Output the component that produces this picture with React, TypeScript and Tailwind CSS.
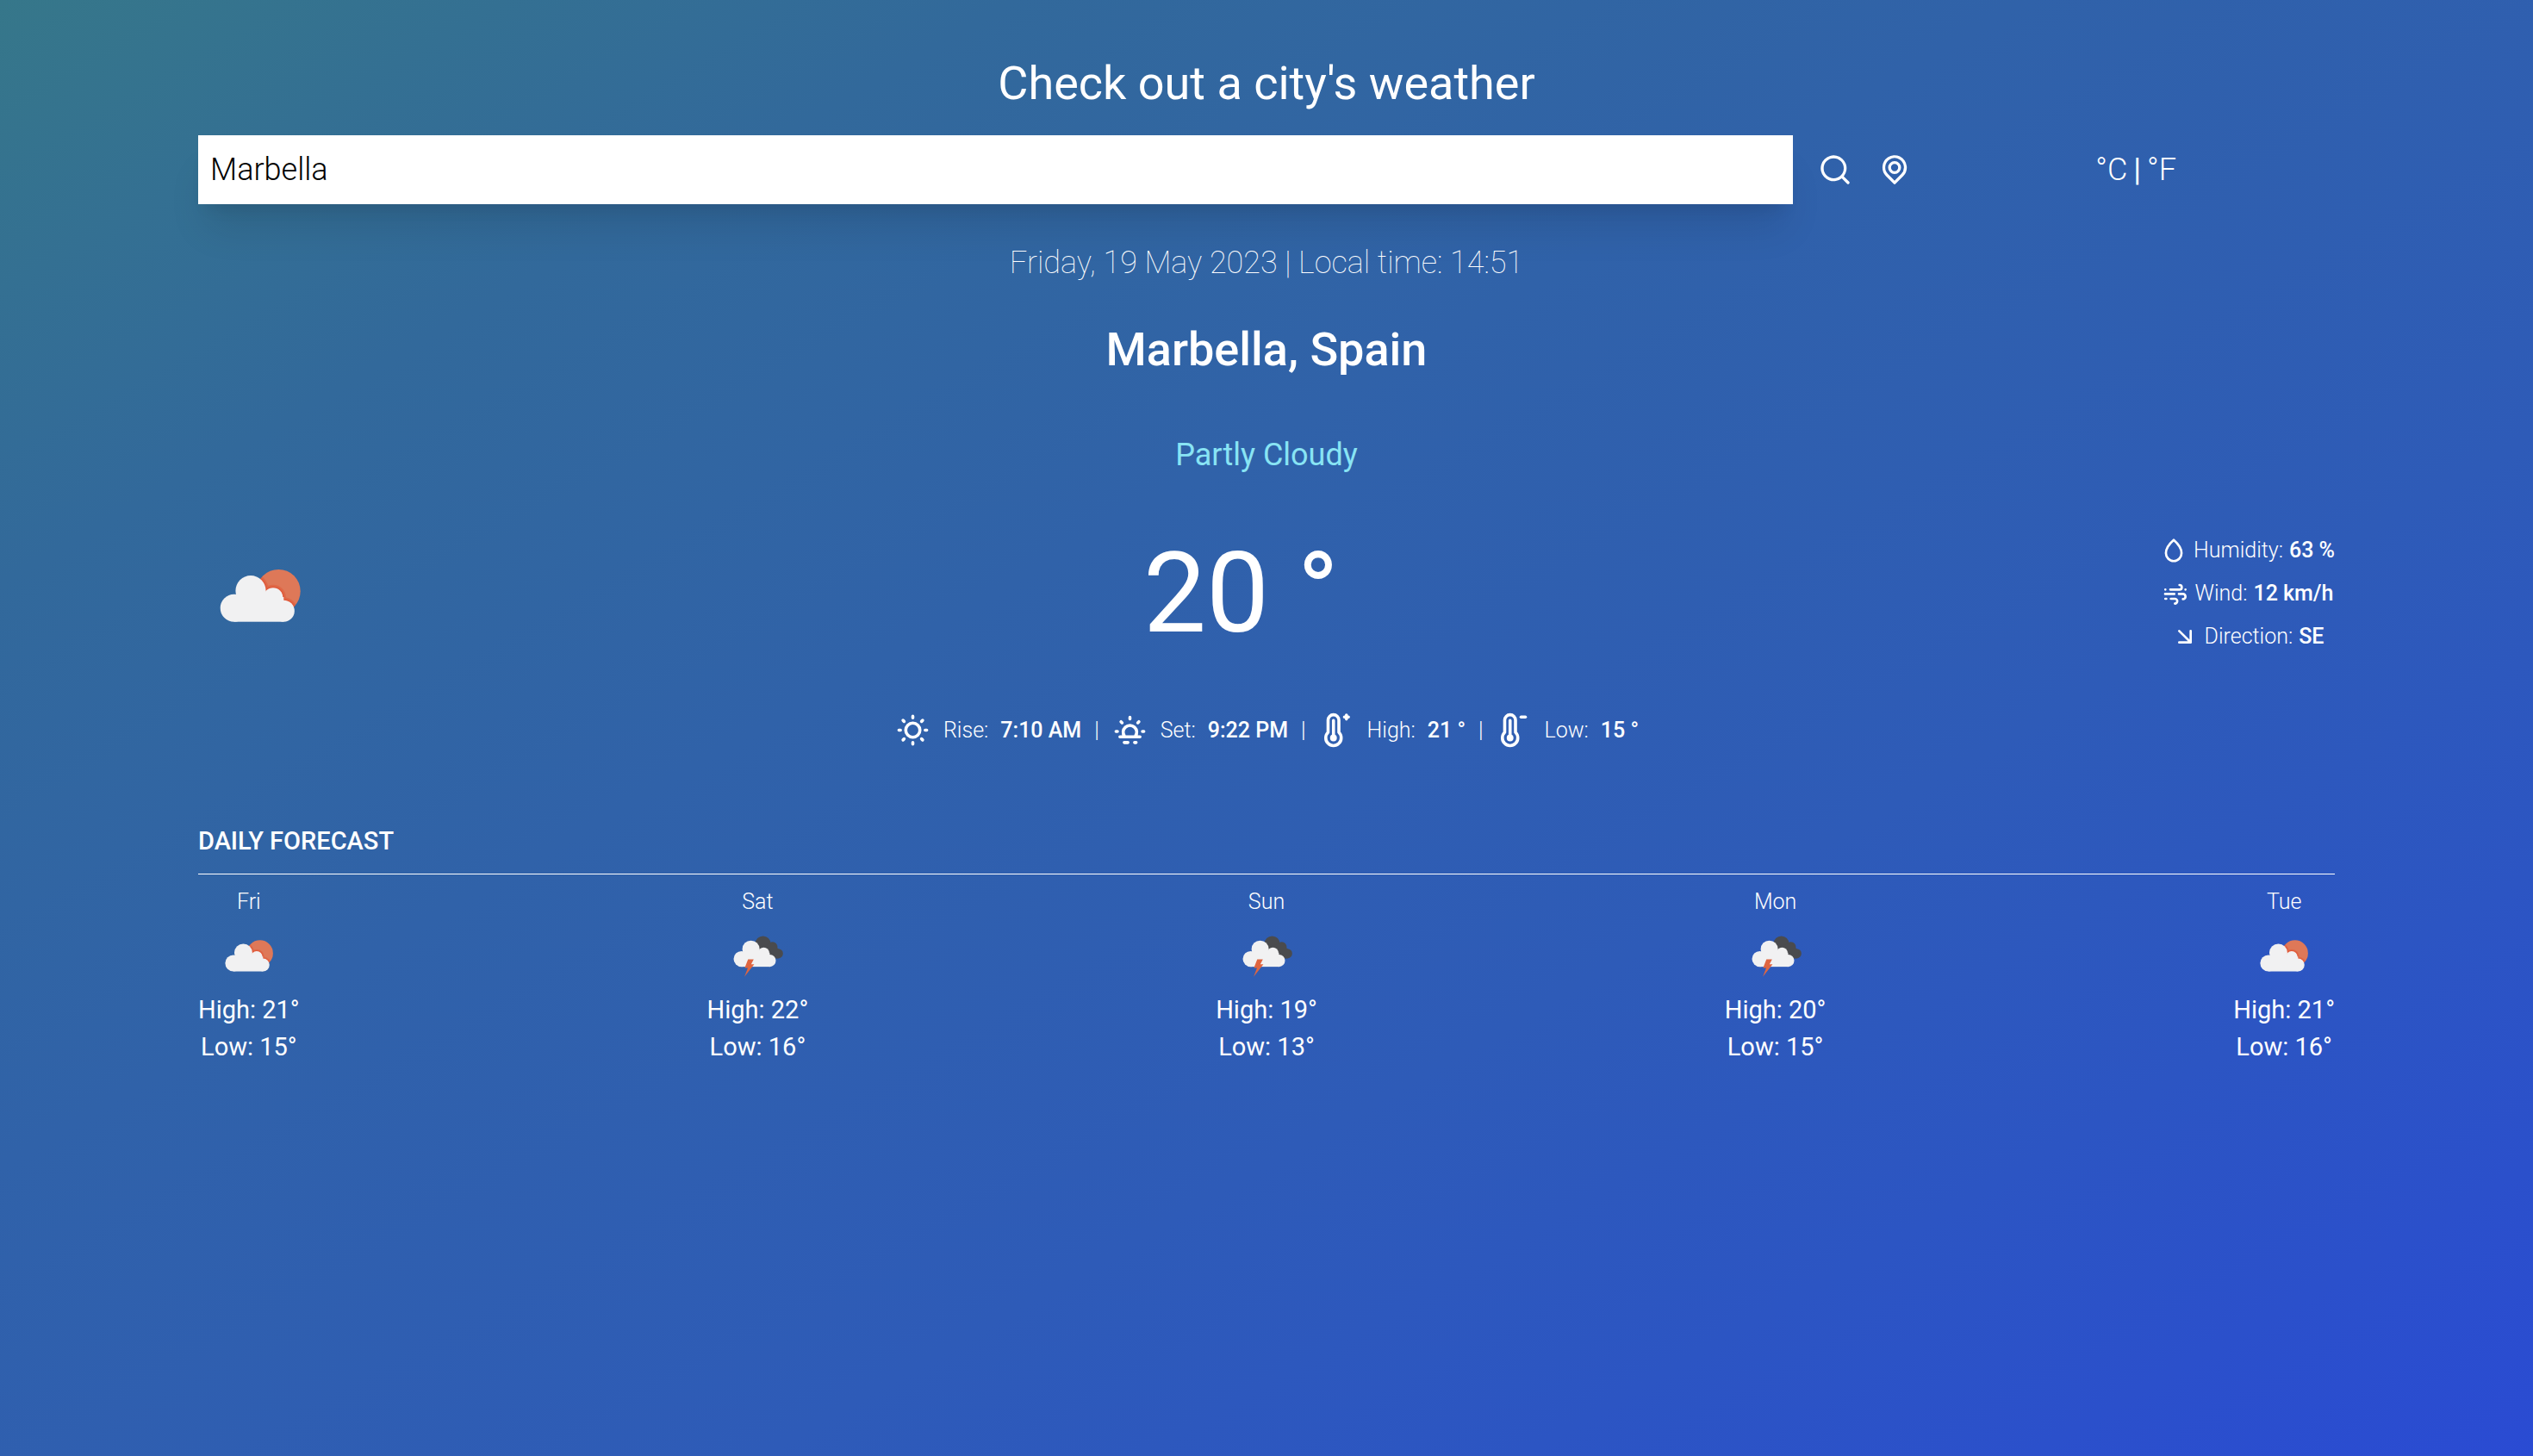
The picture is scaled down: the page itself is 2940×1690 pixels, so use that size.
import { useId, type ReactNode } from "react";

const glyphSizes = { sm: "size-8", md: "size-10", lg: "size-[43px]" };

function Glyph({ size, children }: { size: keyof typeof glyphSizes; children: ReactNode }) {
  return (
    <svg
      viewBox="0 0 24 24"
      aria-hidden="true"
      className={`${glyphSizes[size]} shrink-0`}
      fill="none"
      stroke="currentColor"
      strokeWidth="2"
      strokeLinecap="round"
      strokeLinejoin="round"
    >
      {children}
    </svg>
  );
}

function SearchIcon() {
  return (
    <Glyph size="md">
      <path
        fill="currentColor"
        stroke="none"
        d="M21.71,20.29,18,16.61A9,9,0,1,0,16.61,18l3.68,3.68a1,1,0,0,0,1.42,0A1,1,0,0,0,21.71,20.29ZM11,18a7,7,0,1,1,7-7A7,7,0,0,1,11,18Z"
      />
    </Glyph>
  );
}

function PinIcon() {
  return (
    <Glyph size="md">
      <path
        fill="currentColor"
        stroke="none"
        d="M20.46,9.63A8.5,8.5,0,0,0,7.3,3.36,8.56,8.56,0,0,0,3.63,9.46,8.46,8.46,0,0,0,6,16.46l5.3,5.31a1,1,0,0,0,1.42,0L18,16.46A8.46,8.46,0,0,0,20.46,9.63ZM16.6,15.05,12,19.65l-4.6-4.6A6.49,6.49,0,0,1,5.53,9.83,6.57,6.57,0,0,1,8.42,5a6.47,6.47,0,0,1,7.16,0,6.57,6.57,0,0,1,2.89,4.81A6.49,6.49,0,0,1,16.6,15.05ZM12,6a4.5,4.5,0,1,0,4.5,4.5A4.51,4.51,0,0,0,12,6Zm0,7a2.5,2.5,0,1,1,2.5-2.5A2.5,2.5,0,0,1,12,13Z"
      />
    </Glyph>
  );
}

function SunIcon() {
  return (
    <Glyph size="lg">
      <circle cx="12" cy="12" r="4.6" />
      <path d="M12 3v1M12 20v1M3 12h1M20 12h1M5.65 5.65l.7.7M17.65 17.65l.7.7M5.65 18.35l.7-.7M17.65 6.35l.7-.7" />
    </Glyph>
  );
}

function SunsetIcon() {
  return (
    <Glyph size="lg">
      <path d="M5.500 16.300h13M8.500 16a4.400 4.400 0 1 1 7 0M12 3.700v1M3 12.800h.9M20.100 12.800h.9M6.200 6.500l.7.7M17.100 7.200l.7-.7M8.300 20h2.400M15 20h1" />
    </Glyph>
  );
}

function ThermometerIcon({ sign }: { sign: "plus" | "minus" }) {
  return (
    <Glyph size="lg">
      <path d="M6.400 13.430V5.500a3.500 3.500 0 0 1 7 0v7.930a5 5 0 1 1-7 0z" />
      <path d="M9.900 5.800v11" />
      <circle cx="9.900" cy="17" r="1.200" />
      {sign === "plus" ? <path d="M17 3.500h2.600M18.300 2.200v2.600" /> : <path d="M17 3.500h2.800" />}
    </Glyph>
  );
}

function DropIcon() {
  return (
    <Glyph size="sm">
      <path d="M12 2.800c-3.200 2.800-6.800 7-6.800 11.400a6.800 7 0 0 0 13.600 0c0-4.400-3.600-8.600-6.800-11.400z" />
    </Glyph>
  );
}

function WindIcon() {
  return (
    <Glyph size="sm">
      <path d="M7.500 8.500h8a2 2 0 1 0 0-4M3 12.300h8M15 12.300h3.500a2.250 2.250 0 0 1 0 4.500M8 16.500h3.500a2.100 2.100 0 0 1 0 4.200M3.200 8.500h.01M3.200 16.500h.8M20.700 8.500h.01" />
    </Glyph>
  );
}

function ArrowDownRightIcon() {
  return (
    <Glyph size="sm">
      <path d="M7 7l10 10M17 7v10H7" />
    </Glyph>
  );
}

function CloudShape({ fill, grow = 0 }: { fill: string; grow?: number }) {
  return (
    <g fill={fill}>
      <circle cx="41.7" cy="88.7" r={16 + grow} />
      <circle cx="61" cy="68.7" r={17.6 + grow} />
      <circle cx="87" cy="76.500" r={11.3 + grow} />
      <circle cx="99.300" cy="92.200" r={12.5 + grow} />
      <rect x="41.700" y="76" width="57.600" height="28.700" />
    </g>
  );
}

function PartlyCloudyArt({ className }: { className: string }) {
  const clip = useId();
  return (
    <svg viewBox="0 0 144 144" role="img" aria-label="Partly cloudy" className={className}>
      <clipPath id={clip}>
        <circle cx="93.3" cy="69.300" r="25.400" />
      </clipPath>
      <circle cx="93.3" cy="69.300" r="25.400" fill="#de7858" />
      <g clipPath={`url(#${clip})`}>
        <g opacity="0.5">
          <CloudShape fill="#df5836" grow={3.5} />
        </g>
        <CloudShape fill="#e0593a" grow={1.5} />
      </g>
      <CloudShape fill="#f1f1f2" />
    </svg>
  );
}

function StormArt({ className }: { className: string }) {
  return (
    <svg viewBox="0 0 144 144" role="img" aria-label="Thunderstorm" className={className}>
      <g fill="#4a4b4e">
        <circle cx="83" cy="51" r="15" />
        <circle cx="101.500" cy="57" r="9.800" />
        <circle cx="112.500" cy="70" r="9.500" />
        <path d="M72 60L100 48L118 66L112.500 79.500H90Z" />
      </g>
      <g transform="translate(1.5 -4.100) scale(0.953)">
        <CloudShape fill="#f1f1f2" />
      </g>
      <path d="M54 81H65L60 91H66L47 115L53.500 98H47.500Z" fill="#df6540" />
    </svg>
  );
}

const forecast = [
  { day: "Fri", high: 21, low: 15, Art: PartlyCloudyArt },
  { day: "Sat", high: 22, low: 16, Art: StormArt },
  { day: "Sun", high: 19, low: 13, Art: StormArt },
  { day: "Mon", high: 20, low: 15, Art: StormArt },
  { day: "Tue", high: 21, low: 16, Art: PartlyCloudyArt },
];

const conditions = [
  { icon: <DropIcon />, label: "Humidity:", value: "63 %" },
  { icon: <WindIcon />, label: "Wind:", value: "12 km/h" },
  { icon: <ArrowDownRightIcon />, label: "Direction:", value: "SE" },
];

const dayDetails = [
  { icon: <SunIcon />, label: "Rise:", value: "7:10 AM" },
  { icon: <SunsetIcon />, label: "Set:", value: "9:22 PM" },
  { icon: <ThermometerIcon sign="plus" />, label: "High:", value: "21 °" },
  { icon: <ThermometerIcon sign="minus" />, label: "Low:", value: "15 °" },
];

function SearchBar() {
  return (
    <form className="mt-7 flex items-center gap-[29px]" onSubmit={(e) => e.preventDefault()}>
      <input
        type="text"
        aria-label="City"
        defaultValue="Marbella"
        className="h-20 min-w-0 flex-[4] bg-white px-[14px] text-[36px] font-light text-black shadow-[0_36px_45px_-9px_rgba(0,0,0,0.1),0_14px_18px_-11px_rgba(0,0,0,0.1)] outline-none"
      />
      <button type="submit" aria-label="Search">
        <SearchIcon />
      </button>
      <button type="button" aria-label="Use my location">
        <PinIcon />
      </button>
      <div className="flex flex-1 items-center justify-center px-[3px] text-[36px] leading-[50px]">
        <button type="button" className="font-light">°C</button>
        <span className="mx-[7px]">|</span>
        <button type="button" className="font-light">°F</button>
      </div>
    </form>
  );
}

export default function App() {
  return (
    <main className="min-h-screen bg-[linear-gradient(to_bottom_right,#36778a,#32699b_20%,#3062a9_40%,#2e5bb8_65%,#2c55c3_80%,#2a4bd3)] px-[230px] py-16 font-['Roboto',sans-serif] text-white">
      <h1 className="text-center text-[54px] leading-[65px]">Check out a city's weather</h1>
      <SearchBar />

      <p className="mt-[43px] text-center text-[36px] leading-[50px] font-thin">
        Friday, 19 May 2023 | Local time: 14:51
      </p>
      <h2 className="mt-[43px] text-center text-[54px] leading-[65px] font-medium">Marbella, Spain</h2>
      <p className="mt-[65px] text-center text-[36px] leading-[50px] text-[#88e4f4]">Partly Cloudy</p>

      <section className="mt-16 flex items-center justify-between">
        <PartlyCloudyArt className="size-36" />
        <p className="text-[130px] leading-none">20 °</p>
        <ul className="flex flex-col items-center gap-[14px] text-[25px] leading-9">
          {conditions.map(({ icon, label, value }) => (
            <li key={label} className="flex items-center gap-[7px] font-light">
              {icon}
              {label}
              <span className="font-medium">{value}</span>
            </li>
          ))}
        </ul>
      </section>

      <ul className="mt-[65px] flex items-center justify-center gap-[15px] text-[25px] leading-9 font-light">
        {dayDetails.map(({ icon, label, value }, i) => (
          <li key={label} className="flex items-center gap-[14px]">
            {i > 0 && <span>|</span>}
            {icon}
            <span>{label}</span>
            <span className="font-medium">{value}</span>
          </li>
        ))}
      </ul>

      <section className="mt-[86px]">
        <h3 className="text-[29px] leading-[43px] font-medium">DAILY FORECAST</h3>
        <hr className="mt-4 mb-[14px] border-t border-white" />
        <ul className="flex justify-between">
          {forecast.map(({ day, high, low, Art }) => (
            <li key={day} className="flex flex-col items-center text-[29px] leading-[43px]">
              <p className="text-[25px] leading-9 font-light">{day}</p>
              <Art className="size-[86px]" />
              <p>High: {high}°</p>
              <p>Low: {low}°</p>
            </li>
          ))}
        </ul>
      </section>
    </main>
  );
}
